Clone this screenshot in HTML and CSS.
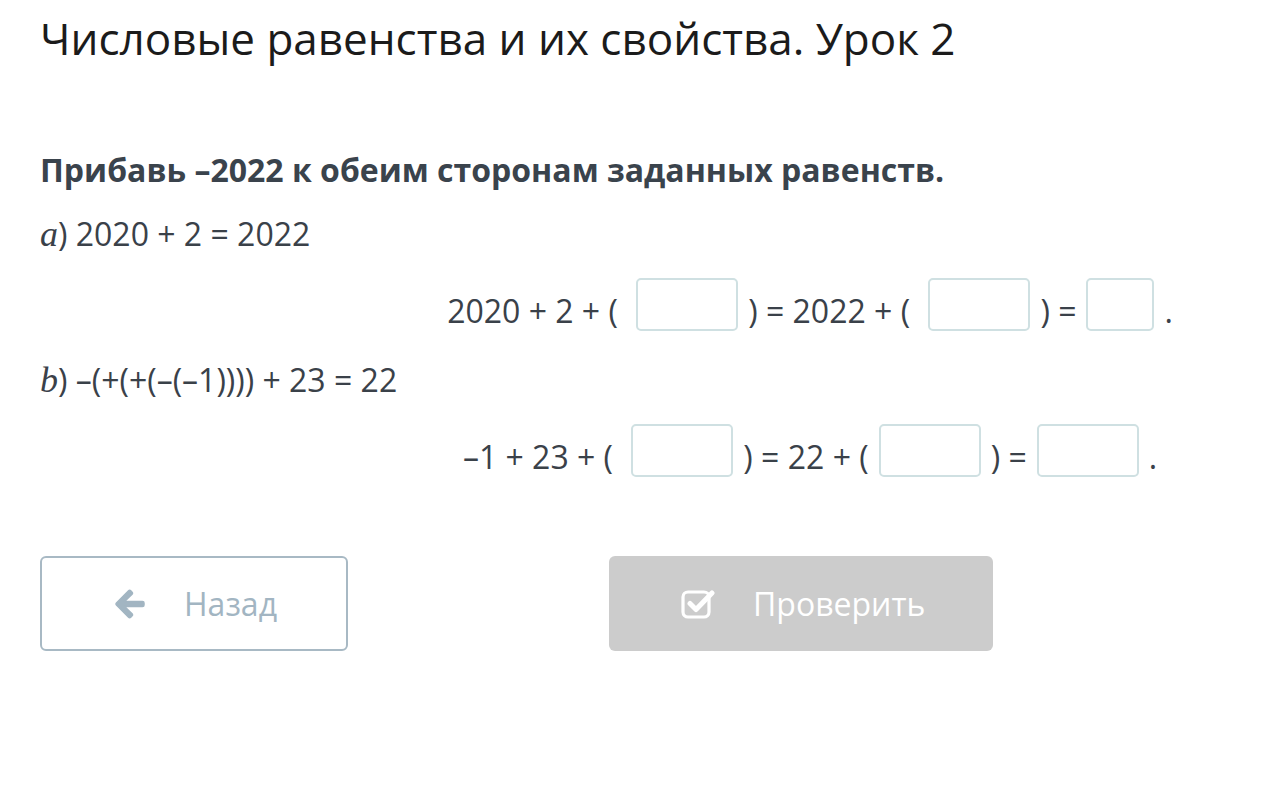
FILE: index.html
```html
<!DOCTYPE html>
<html lang="ru">
<head>
<meta charset="utf-8">
<link rel="stylesheet" href="styles.css">
</head>
<body>
<div class="page">
  <h1 class="title">Числовые равенства и их свойства. Урок 2</h1>
  <p class="task">Прибавь –2022 к обеим сторонам заданных равенств.</p>

  <div class="item">
    <div class="given"><span class="lbl">a</span>) 2020 + 2 = 2022</div>
    <div class="eq-row">
      <span class="t">2020 + 2 + (&nbsp;</span>
      <span class="box"></span>
      <span class="t">) = 2022 + (&nbsp;</span>
      <span class="box"></span>
      <span class="t">) =</span>
      <span class="box small"></span>
      <span class="t">.</span>
    </div>
  </div>

  <div class="item">
    <div class="given"><span class="lbl">b</span>) –(+(+(–(–1)))) + 23 = 22</div>
    <div class="eq-row">
      <span class="t">–1 + 23 + (&nbsp;</span>
      <span class="box"></span>
      <span class="t">) = 22 + (</span>
      <span class="box"></span>
      <span class="t">) =</span>
      <span class="box"></span>
      <span class="t">.</span>
    </div>
  </div>

  <div class="actions">
    <button class="btn back">
      <svg class="ico" viewBox="0 0 448 512" width="32" height="32"><path fill="currentColor" stroke="currentColor" stroke-width="24" stroke-linejoin="round" d="M257.5 445.1l-22.2 22.2c-9.4 9.4-24.6 9.4-33.9 0L7 273c-9.4-9.4-9.4-24.6 0-33.9L201.4 44.7c9.4-9.4 24.6-9.4 33.9 0l22.2 22.2c9.5 9.5 9.3 25-.4 34.3L136.6 216H424c13.3 0 24 10.7 24 24v32c0 13.3-10.7 24-24 24H136.6l120.5 114.8c9.8 9.3 10 24.8.4 34.3z"/></svg>
      <span>Назад</span>
    </button>
    <button class="btn check">
      <svg class="ico" viewBox="0 0 34 32" width="34" height="32"><rect x="2" y="4" width="26" height="25" rx="5" fill="none" stroke="currentColor" stroke-width="3.2"/><path d="M9 15.5l6 6L31 5" fill="none" stroke="currentColor" stroke-width="5" stroke-linecap="round" stroke-linejoin="round"/></svg>
      <span>Проверить</span>
    </button>
  </div>
</div>
</body>
</html>
```
FILE: styles.css
```css
* { box-sizing: border-box; }
html, body { margin: 0; background: #fff; }
body { font-family: "Open Sans", "Noto Sans", sans-serif; color: #333b44; }

.page { padding: 10px 40px 40px 40px; }

.title {
  margin: 0;
  font-size: 44px;
  font-weight: 400;
  line-height: 56px;
  color: #1b1b1b;
}

.task {
  margin: 82px 0 0 0;
  font-size: 32px;
  font-weight: 700;
  line-height: 44px;
  color: #3a434c;
}

.item { margin-top: 20px; }
.item + .item { margin-top: 27px; }

.given {
  font-size: 32px;
  line-height: 44px;
  color: #3a4149;
}
.lbl {
  font-family: "Liberation Serif", "Times New Roman", serif;
  font-style: italic;
  font-size: 36px;
}

.eq-row {
  display: flex;
  align-items: flex-start;
  justify-content: center;
  margin: 22px -40px 0 316px;
  font-size: 32px;
  color: #3a4149;
  gap: 10px;
}
.eq-row .t { line-height: 40px; padding-top: 13px; white-space: pre; }
.box {
  width: 102px;
  height: 53px;
  border: 2px solid #cfe0e2;
  border-radius: 5px;
  background: #fff;
}
.box.small { width: 68px; }

.actions {
  display: flex;
  gap: 261px;
  margin-top: 79px;
}
.btn {
  height: 95px;
  border-radius: 6px;
  font-family: "Open Sans", "Noto Sans", sans-serif;
  font-size: 32px;
  display: flex;
  align-items: center;
  gap: 38px;
  padding: 0 0 0 72px;
  cursor: pointer;
}
.btn.back {
  width: 308px;
  background: #fff;
  border: 2px solid #a8b9c4;
  color: #a2b5c2;
}
.btn.check {
  width: 384px;
  background: #cccccc;
  border: none;
  color: #ffffff;
  gap: 38px;
}
.ico { display: block; flex: none; }
```
